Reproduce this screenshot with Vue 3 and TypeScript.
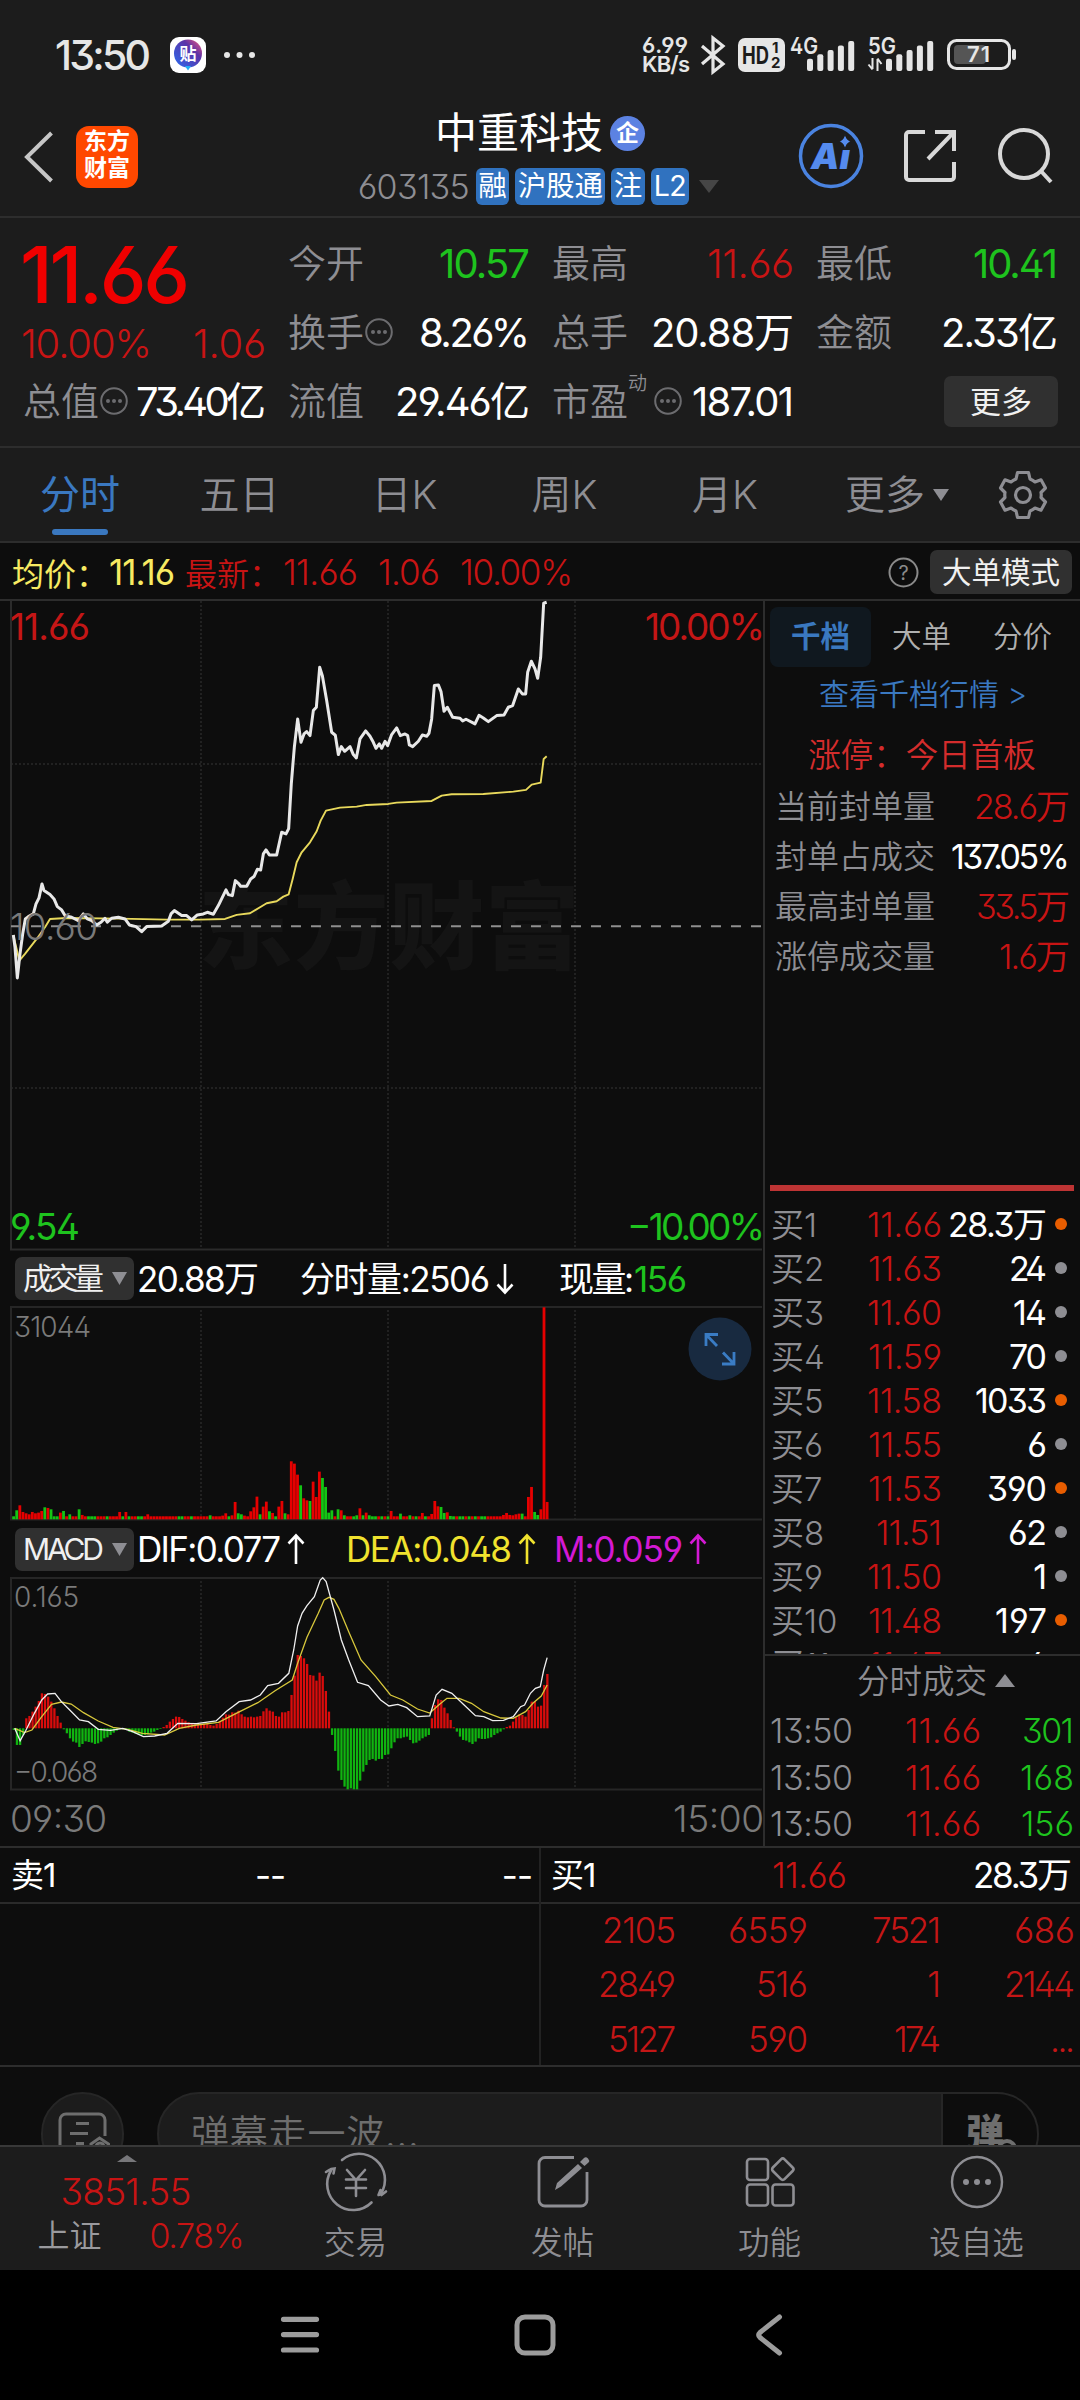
<script setup lang="ts">
interface Cell { label: string; value: string; w: number; tone: string; dots?: boolean; sup?: string }
interface Level { name: string; price: string; pw: number; qty: string; qw: number; hot?: boolean }

// Spreads or tightens the letters of a text so that it takes the given width.
const vFit = {
  mounted(el: HTMLElement, binding: { value: number }) {
    const n = Array.from((el.textContent ?? '').trim()).length
    if (n < 2) return
    const gap = (binding.value - el.getBoundingClientRect().width) / (n - 1)
    el.style.letterSpacing = `${gap}px`
    el.style.marginRight = `${-gap}px`
  },
}

const columns: Cell[][] = [
  [
    { label: '今开', value: '10.57', w: 91, tone: 'green' },
    { label: '换手', value: '8.26%', w: 111, tone: 'white', dots: true },
    { label: '流值', value: '29.46亿', w: 135, tone: 'white' },
  ],
  [
    { label: '最高', value: '11.66', w: 87, tone: 'red' },
    { label: '总手', value: '20.88万', w: 143, tone: 'white' },
    { label: '市盈', value: '187.01', w: 102, tone: 'white', dots: true, sup: '动' },
  ],
  [
    { label: '最低', value: '10.41', w: 85, tone: 'green' },
    { label: '金额', value: '2.33亿', w: 117, tone: 'white' },
  ],
]

const tabs = [
  { t: '分时', w: 160, on: true },
  { t: '五日', w: 159 },
  { t: '日K', w: 171 },
  { t: '周K', w: 149 },
  { t: '月K', w: 172 },
]

const limits = [
  { label: '当前封单量', value: '28.6万', w: 96, tone: 'red' },
  { label: '封单占成交', value: '137.05%', w: 119, tone: 'white' },
  { label: '最高封单量', value: '33.5万', w: 94, tone: 'red' },
  { label: '涨停成交量', value: '1.6万', w: 71, tone: 'red' },
]

const levels: Level[] = [
  { name: '买1', price: '11.66', pw: 75, qty: '28.3万', qw: 99, hot: true },
  { name: '买2', price: '11.63', pw: 74, qty: '24', qw: 38 },
  { name: '买3', price: '11.60', pw: 75, qty: '14', qw: 34 },
  { name: '买4', price: '11.59', pw: 74, qty: '70', qw: 38 },
  { name: '买5', price: '11.58', pw: 75, qty: '1033', qw: 72, hot: true },
  { name: '买6', price: '11.55', pw: 74, qty: '6', qw: 20 },
  { name: '买7', price: '11.53', pw: 74, qty: '390', qw: 60, hot: true },
  { name: '买8', price: '11.51', pw: 66, qty: '62', qw: 39 },
  { name: '买9', price: '11.50', pw: 75, qty: '1', qw: 12 },
  { name: '买10', price: '11.48', pw: 74, qty: '197', qw: 52, hot: true },
  { name: '买11', price: '11.47', pw: 74, qty: '4', qw: 20 },
]

const trades = [
  { qty: '301', w: 52 },
  { qty: '168', w: 54 },
  { qty: '156', w: 53 },
]

const orders = [
  [{ q: '2105', w: 74 }, { q: '6559', w: 80 }, { q: '7521', w: 69 }, { q: '686', w: 61 }],
  [{ q: '2849', w: 78 }, { q: '516', w: 52 }, { q: '1', w: 12 }, { q: '2144', w: 71 }],
  [{ q: '5127', w: 68 }, { q: '590', w: 60 }, { q: '174', w: 47 }, { q: '...', w: 25 }],
]

const price = '40,1033 45,1070 52,1162 60,1090 68,1030 76,985 85,978 100,970 108,940 117,922 126,880 132,900 150,912 162,925 172,948 185,958 195,975 215,980 235,990 250,970 262,985 275,990 290,1003 303,995 315,983 322,995 335,983 355,980 375,985 388,1003 408,1008 425,1023 440,1008 485,1006 505,992 513,970 523,960 545,975 560,975 575,988 592,973 610,970 622,965 640,971 655,945 678,898 685,912 697,915 706,870 715,878 722,887 740,887 752,865 762,858 772,836 782,838 790,790 798,778 808,793 830,793 845,725 858,730 866,714 874,578 883,470 893,385 903,455 912,430 920,423 930,435 940,360 949,350 959,230 967,255 980,330 995,425 1006,434 1015,492 1024,468 1034,482 1050,468 1060,492 1069,502 1080,445 1097,421 1110,437 1120,455 1128,473 1138,460 1145,473 1155,452 1163,465 1175,432 1190,412 1201,435 1215,430 1223,435 1228,463 1238,468 1255,452 1267,433 1280,437 1287,428 1295,385 1303,285 1315,283 1323,303 1332,362 1342,350 1358,380 1380,383 1388,391 1398,386 1425,400 1437,374 1450,382 1465,393 1490,375 1512,373 1525,350 1538,345 1555,295 1567,310 1577,310 1583,245 1594,212 1605,235 1613,263 1622,200 1631,38 1640,35'
const average = '40,1033 58,1110 75,1090 110,1045 135,1010 150,985 200,982 360,984 500,987 600,987 675,985 710,973 750,968 800,938 830,932 850,918 866,911 878,865 890,815 905,785 930,755 950,722 962,690 978,660 1020,651 1070,648 1100,643 1165,640 1190,636 1295,631 1325,615 1355,611 1450,610 1540,603 1578,598 1595,582 1622,576 1631,505 1640,497'
const dif = '30,625 41,662 52,633 70,580 85,540 97,522 112,520 125,545 140,567 162,600 180,605 200,628 225,631 250,625 270,635 292,650 315,648 340,640 362,610 400,611 440,603 460,575 487,545 510,540 530,525 545,497 567,490 588,460 598,390 606,318 615,280 625,257 640,230 652,180 657,173 664,185 680,270 695,360 710,420 728,487 750,497 775,540 792,558 810,553 828,563 850,590 875,588 888,525 900,508 920,520 945,555 968,587 985,590 1003,602 1025,601 1045,590 1060,560 1068,555 1080,520 1090,505 1100,500 1107,450 1114,413'
const dea = '30,625 50,638 65,630 85,590 105,553 125,546 145,552 170,578 200,603 230,622 260,628 290,640 335,645 365,625 400,615 445,607 485,577 525,548 560,512 595,480 606,430 625,352 648,280 660,240 670,232 680,238 690,265 710,335 735,420 765,470 795,525 820,540 850,567 875,579 895,553 910,535 935,535 960,550 985,575 1020,594 1045,595 1070,575 1085,550 1102,528 1114,495'

// Maps "x,y x,y" pairs to chart pixels.
function scale(points: string, kx: number, ky: number, dx = 0, dy = 0): string {
  return points
    .split(' ')
    .map((p) => {
      const [x, y] = p.split(',').map(Number)
      return `${(x / kx - dx).toFixed(2)},${(y / ky - dy).toFixed(2)}`
    })
    .join(' ')
}
const pricePts = scale(price, 3, 3, 0, 11)
const avgPts = scale(average, 3, 3, 0, 11)
const difPts = scale(dif, 2.036, 3, 0, 57)
const deaPts = scale(dea, 2.036, 3, 0, 57)

// Minute volumes: height in thirds of a pixel, with the bar's colour.
const volume = (
  '9g 27g 42r 22r 18r 15r 22r 18r 20r 25r 36g 34r 30g 9g 9g 20r 25g 9r 15g 9r 9r 30g 13r 9r 9g 9g 9g 9r 9r 9r 9g 9r 9r 9r 22r 9g 22r 9g 9r 9r 9g 9g 9r 15r ' +
  '9r 9r 9r 9r 9r 9r 9r 9r 9r 9g 9g 9r 9r 9g 9r 9r 9r 9r 9r 12g 9r 9r 9r 11r 18r 9g 12r 52r 18g 15g 11r 9r 24r 36r 68r 15g 38r 53r 24g 19r 9g 38r 55r 18g 15r ' +
  '174r 167r 134r 102g 63r 57r 55g 113r 67r 143r 124g 97g 20g 27g 9r 30g 27r 12g 9r 9r 9g 12g 33r 12g 20r 12g 9g 9g 9r 9g 9r 9g 25r 9r 9r 17g 9r 9r 12g 9r 9g 9r 19r 9g 9r 16r ' +
  '55r 39r 37g 19g 21r 10g 9g 9r 9g 9g 9r 9g 9r 9g 9r 9g 9g 9r 9r 9r 9r 9r 13r 19r 13r 12r 15r 17r 17g 9r 67r 97r 22g 13g 30r 636r 52r'
)
  .split(' ')
  .map((s, i) => ({ x: 12.2 + i * 3.12, h: parseInt(s) / 3, c: s.endsWith('g') ? '#14c414' : '#e60000' }))

const macdTops = [
  630, 675, 675, 645, 595, 588, 575, 560, 543, 520, 522, 530, 545, 565, 588, 608, 628, 640, 655, 665, 668, 681, 672, 664, 666, 668, 672, 670,
  665, 655, 652, 645, 638, 632, 628, 628, 630, 635, 638, 641, 643, 645, 645, 643, 638, 635, 630, 627, 621, 615, 605, 597, 590, 591, 597, 602,
  607, 612, 613, 614, 612, 612, 612, 615, 617, 612, 604, 593, 583, 584, 577, 578, 572, 583, 590, 592, 590, 592, 590, 588, 574, 565, 572, 575,
  588, 590, 577, 577, 573, 525, 467, 405, 408, 415, 432, 465, 467, 482, 458, 468, 513, 575, 645, 693, 752, 780, 800, 808, 805, 808, 808, 782,
  755, 735, 720, 717, 722, 717, 717, 705, 703, 685, 667, 655, 655, 652, 650, 660, 670, 668, 662, 655, 650, 645, 595, 555, 538, 540, 563, 580,
  600, 622, 635, 650, 660, 662, 667, 672, 665, 655, 657, 657, 655, 652, 645, 640, 635, 628, 621, 617, 605, 592, 583, 585, 590, 570, 545, 545,
  560, 557, 495, 462,
]
const macd = macdTops.map((t, i) => {
  const d = (625 - t) / 3
  return { x: 12.7 + i * 3.12, y: d > 0 ? 151.3 - d : 151.3, h: Math.abs(d), c: d > 0 ? '#d90c0c' : '#10b410' }
})
const grid = [201, 388, 575]
const bars4 = [14, 19, 24, 29, 34]
</script>

<template>
  <div class="screen">
    <div class="status">
      <span class="clock" v-fit="96">13:50</span>
      <svg class="tie" width="36" height="36" viewBox="0 0 36 36">
        <defs>
          <linearGradient id="tg" x1="1" y1="0" x2="0" y2="1">
            <stop offset="0" stop-color="#ff5a78" /><stop offset=".35" stop-color="#5a34a8" /><stop offset="1" stop-color="#2b6cf0" />
          </linearGradient>
        </defs>
        <rect width="36" height="36" rx="9" fill="#fff" />
        <circle cx="18" cy="16.500" r="14" fill="url(#tg)" /><path d="M15 29h6l-3 4.500z" fill="#22b0f5" />
        <text x="18" y="23" text-anchor="middle" font-size="17" font-weight="700" fill="#fff">贴</text>
      </svg>
      <svg width="34" height="8" viewBox="0 0 34 8" fill="#e6e6e6"><circle cx="4" cy="4" r="3" /><circle cx="16.500" cy="4" r="3" /><circle cx="29" cy="4" r="3" /></svg>
      <div class="speed"><span v-fit="46">6.99</span><span v-fit="48">KB/s</span></div>
      <svg class="bt" width="26" height="38" viewBox="0 0 26 38" fill="none" stroke="#e6e6e6" stroke-width="3.200"><path d="M2 10l21 18-10 8V2l10 8L2 28" /></svg>
      <svg class="hd" width="47" height="34" viewBox="0 0 47 34">
        <rect width="47" height="34" rx="7" fill="#e6e6e6" />
        <text x="4" y="26" font-size="24" font-weight="700" textLength="27" lengthAdjust="spacingAndGlyphs" fill="#1c1c1c">HD</text>
        <text x="34" y="15" font-size="15" font-weight="700" fill="#1c1c1c">1</text>
        <text x="33" y="30" font-size="15" font-weight="700" fill="#1c1c1c">2</text>
      </svg>
      <svg class="sig1" width="66" height="36" viewBox="0 0 66 36" fill="#e6e6e6">
        <text x="0" y="17" font-size="23" font-weight="600" textLength="28" lengthAdjust="spacingAndGlyphs">4G</text>
        <rect v-for="(h, i) in bars4" :key="i" :x="17 + i * 10.300" :y="34 - h * 0.880" width="6" :height="h * 0.880" rx="2" />
      </svg>
      <svg class="sig2" width="66" height="36" viewBox="0 0 66 36" fill="#e6e6e6">
        <text x="0" y="17" font-size="23" font-weight="600" textLength="28" lengthAdjust="spacingAndGlyphs">5G</text>
        <path d="M4.500 21v11M0.500 27.500l4 5M9.500 34V22M13.500 27l-4-5.500" stroke="#e6e6e6" stroke-width="2" />
        <rect v-for="(h, i) in bars4" :key="i" :x="18 + i * 10.300" :y="34 - h * 0.880" width="6" :height="h * 0.880" rx="2" />
      </svg>
      <svg class="bat" width="70" height="32" viewBox="0 0 70 32">
        <rect x="1.500" y="1.500" width="61" height="28" rx="8" fill="none" stroke="#e6e6e6" stroke-width="3" />
        <rect x="7" y="6" width="32" height="19" rx="4" fill="#555" /><rect x="65" y="10" width="4" height="11" rx="2" fill="#e6e6e6" />
        <text x="20" y="23" font-size="22" font-weight="600" textLength="23" fill="#e6e6e6">71</text>
      </svg>
    </div>

    <header class="head">
      <div class="head-left">
        <svg width="30" height="54" viewBox="0 0 30 54" fill="none" stroke="#c6c6c6" stroke-width="4"><path d="M27.500 3L3 27l24.500 24" /></svg>
        <div class="logo"><span>东方</span><span>财富</span></div>
      </div>
      <div class="head-mid">
        <div class="title"><b>中重科技</b><i>企</i></div>
        <div class="codes">
          <span class="code" v-fit="112">603135</span>
          <em>融</em><em>沪股通</em><em>注</em><em class="l2">L2</em>
          <svg width="20" height="13" viewBox="0 0 20 13"><path d="M0 0h20L10 13z" fill="#464646" /></svg>
        </div>
      </div>
      <div class="head-right">
        <svg width="66" height="66" viewBox="0 0 66 66">
          <circle cx="33" cy="33" r="30.500" fill="none" stroke="#4a83e0" stroke-width="3.500" />
          <text x="13" y="46" font-size="35" font-weight="900" font-style="italic" textLength="39" lengthAdjust="spacingAndGlyphs" fill="#558bee">Aı</text>
          <path d="M47 11q1 5.500 5.500 7.500-4.500 2-5.500 7.500-1-5.500-5.500-7.500 4.500-2 5.500-7.500z" fill="#558bee" stroke="#1c1c1c" stroke-width="1" />
        </svg>
        <svg width="54" height="54" viewBox="0 0 54 54" fill="none" stroke="#d8d8d8" stroke-width="4"><path d="M22 3H6a3 3 0 0 0-3 3v42a3 3 0 0 0 3 3h42a3 3 0 0 0 3-3V33M32 3h19v19M50 4L25 30" /></svg>
        <svg width="56" height="56" viewBox="0 0 56 56" fill="none" stroke="#d8d8d8" stroke-width="4"><circle cx="27" cy="26" r="24" /><path d="M43 42l11 12" /></svg>
      </div>
    </header>

    <section class="quote">
      <div class="col first">
        <div class="big"><span v-fit="170">11.66</span></div>
        <div class="chg red"><span v-fit="131">10.00%</span><span v-fit="73">1.06</span></div>
        <div class="cell">
          <label>总值</label>
          <svg class="more-dot" width="28" height="28" viewBox="0 0 28 28"><circle cx="14" cy="14" r="12.800" fill="none" stroke="#6c6c6f" stroke-width="2" /><g fill="#6c6c6f"><circle cx="8" cy="14" r="2" /><circle cx="14" cy="14" r="2" /><circle cx="20" cy="14" r="2" /></g></svg>
          <span class="val white" v-fit="130">73.40亿</span>
        </div>
      </div>
      <div v-for="(col, c) in columns" :key="c" class="col">
        <div v-for="cell in col" :key="cell.label" class="cell">
          <label>{{ cell.label }}</label>
          <sup v-if="cell.sup">{{ cell.sup }}</sup>
          <svg v-if="cell.dots" class="more-dot" width="28" height="28" viewBox="0 0 28 28"><circle cx="14" cy="14" r="12.800" fill="none" stroke="#6c6c6f" stroke-width="2" /><g fill="#6c6c6f"><circle cx="8" cy="14" r="2" /><circle cx="14" cy="14" r="2" /><circle cx="20" cy="14" r="2" /></g></svg>
          <span class="val" :class="cell.tone" v-fit="cell.w">{{ cell.value }}</span>
        </div>
        <div v-if="c === 2" class="cell"><button class="more">更多</button></div>
      </div>
    </section>

    <nav class="tabs">
      <a v-for="t in tabs" :key="t.t" :class="{ on: t.on }" :style="{ width: t.w + 'px' }">{{ t.t }}</a>
      <a class="tab-more">更多<svg width="16" height="12" viewBox="0 0 16 12"><path d="M0 0h16L8 12z" fill="#8e8e93" /></svg></a>
      <svg class="gear" width="50" height="50" viewBox="-25 -25 50 50" fill="none" stroke="#8e8e93" stroke-width="3.200" stroke-linejoin="round">
        <path d="M-5.500 -22.500H5.500L7 -16Q10 -14.700 12 -13L18 -15.200L22.500 -7L18 -2.500Q18.500 0 18 2.500L22.500 7L18 15.200L12 13Q10 14.700 7 16L5.500 22.500H-5.500L-7 16Q-10 14.700 -12 13L-18 15.200L-22.500 7L-18 2.500Q-18.500 0 -18 -2.500L-22.500 -7L-18 -15.200L-12 -13Q-10 -14.700 -7 -16Z" />
        <circle r="7.500" />
      </svg>
    </nav>

    <div class="info">
      <span class="yellow lab">均价：</span><span class="yellow v1" v-fit="66">11.16</span>
      <span class="red lab">最新：</span><span class="red v2" v-fit="75">11.66</span><span class="red v3" v-fit="62">1.06</span><span class="red v4" v-fit="113">10.00%</span>
      <svg class="help" width="31" height="31" viewBox="0 0 31 31"><circle cx="15.500" cy="15.500" r="14" fill="none" stroke="#8a8a8a" stroke-width="2" /><text x="15.500" y="22.500" text-anchor="middle" font-size="20" fill="#8a8a8a">?</text></svg>
      <button>大单模式</button>
    </div>

    <main class="main">
      <div class="charts">
        <svg width="763" height="650" viewBox="0 0 763 650">
          <text x="198" y="361" font-size="95" font-weight="900" textLength="382" fill="#141414">东方财富</text>
          <g stroke="#292929" stroke-width="1.500" stroke-dasharray="2 2">
            <path v-for="x in grid" :key="x" :d="`M${x} 0V648`" /><path d="M11 163H763M11 487H763" />
          </g>
          <path d="M11 0V648.500H762" fill="none" stroke="#2b2b2b" stroke-width="2" />
          <path d="M11 325.200H762" stroke="#8f8f8f" stroke-width="2" stroke-dasharray="10 10" />
          <polyline :points="avgPts" transform="translate(0 .6)" fill="none" stroke="#e8d95c" stroke-width="1.900" stroke-linejoin="round" />
          <polyline :points="pricePts" transform="translate(0 .6)" fill="none" stroke="#e8e8e8" stroke-width="3" stroke-linejoin="round" />
          <g font-size="37">
            <text x="10" y="38.500" textLength="80" fill="#c41616">11.66</text>
            <text x="645" y="38.500" textLength="120" fill="#c41616">10.00%</text>
            <text x="10" y="339" textLength="88" fill="#7a7a7a" font-weight="350">10.60</text>
            <text x="10" y="638.500" textLength="70" fill="#1ec31e">9.54</text>
            <text x="627" y="638.500" textLength="138" fill="#1ec31e">−10.00%</text>
          </g>
        </svg>

        <div class="ind">
          <button><span v-fit="81">成交量</span><svg width="15" height="13" viewBox="0 0 15 13"><path d="M0 0h15L7.500 13z" fill="#8e8e93" /></svg></button>
          <span class="i1" v-fit="122">20.88万</span><span class="i2" v-fit="190">分时量:2506</span>
          <svg class="arr" width="18" height="32" viewBox="0 0 18 32" fill="none" stroke="#fff" stroke-width="2.600"><path d="M9 1v28M1.500 21.500L9 29.500l7.500-8" /></svg>
          <span class="i3" v-fit="75">现量:</span><span class="green" v-fit="53">156</span>
        </div>

        <div class="vol">
          <svg width="763" height="215" viewBox="0 0 763 215">
            <g stroke="#292929" stroke-width="1.500" stroke-dasharray="2 2"><path v-for="x in grid" :key="x" :d="`M${x} 0V213`" /></g>
            <path d="M762 1H11V213.500H762" fill="none" stroke="#262626" stroke-width="2" />
            <text x="14" y="31" font-size="28" textLength="77" font-weight="350" fill="#7a7a7a">31044</text>
            <rect v-for="(b, i) in volume" :key="i" :x="b.x" :y="213.300 - b.h" width="2.800" :height="b.h" :fill="b.c" />
          </svg>
          <svg class="expand" width="64" height="64" viewBox="0 0 64 64">
            <circle cx="32" cy="32" r="31.500" fill="#182a40" />
            <path d="M18 29V17.500h12M18 17.500L29 29M46 35v12H34M46 47L35 35.500" fill="none" stroke="#3a7cc4" stroke-width="2.800" />
          </svg>
        </div>

        <div class="ind macd-row">
          <button><span v-fit="81">MACD</span><svg width="15" height="13" viewBox="0 0 15 13"><path d="M0 0h15L7.500 13z" fill="#8e8e93" /></svg></button>
          <span class="i1" v-fit="144">DIF:0.077</span>
          <svg class="arr" width="18" height="32" viewBox="0 0 18 32" fill="none" stroke="#fff" stroke-width="2.600"><path d="M9 31V3M1.500 10.500L9 2.500l7.500 8" /></svg>
          <span class="yel i4" v-fit="166">DEA:0.048</span>
          <svg class="arr" width="18" height="32" viewBox="0 0 18 32" fill="none" stroke="#f0e22e" stroke-width="2.600"><path d="M9 31V3M1.500 10.500L9 2.500l7.500 8" /></svg>
          <span class="mag i5" v-fit="129">M:0.059</span>
          <svg class="arr" width="18" height="32" viewBox="0 0 18 32" fill="none" stroke="#d419d4" stroke-width="2.600"><path d="M9 31V3M1.500 10.500L9 2.500l7.500 8" /></svg>
        </div>

        <svg width="763" height="270" viewBox="0 0 763 270">
          <g stroke="#292929" stroke-width="1.500" stroke-dasharray="2 2"><path v-for="x in grid" :key="x" :d="`M${x} 0V212`" /></g>
          <path d="M762 1H11V212.500H762" fill="none" stroke="#262626" stroke-width="2" />
          <rect v-for="(b, i) in macd" :key="i" :x="b.x" :y="b.y" width="2.300" :height="b.h" :fill="b.c" />
          <polyline :points="deaPts" fill="none" stroke="#d8c83c" stroke-width="1.300" />
          <polyline :points="difPts" fill="none" stroke="#f0f0f0" stroke-width="1.300" />
          <g fill="#7a7a7a" font-weight="350">
            <text x="14" y="30" font-size="28" textLength="65">0.165</text>
            <text x="14" y="205" font-size="28" textLength="84">−0.068</text>
            <text x="10" y="255" font-size="37" textLength="97">09:30</text>
            <text x="673" y="255" font-size="37" textLength="91">15:00</text>
          </g>
        </svg>
      </div>

      <aside class="side">
        <div class="seg"><a class="on">千档</a><a>大单</a><a>分价</a></div>
        <div class="link">查看千档行情 &gt;</div>
        <div class="limit"><span>涨停：今日首板</span></div>
        <div v-for="l in limits" :key="l.label" class="lrow"><label>{{ l.label }}</label><span :class="l.tone" v-fit="l.w">{{ l.value }}</span></div>
        <div class="redbar"></div>
        <div class="book">
          <div v-for="l in levels" :key="l.name" class="brow">
            <label>{{ l.name }}</label>
            <span class="red bp"><span v-fit="l.pw">{{ l.price }}</span></span>
            <span class="bq"><span v-fit="l.qw">{{ l.qty }}</span></span>
            <i :class="{ hot: l.hot }"></i>
          </div>
        </div>
        <div class="deal-head">分时成交<svg width="20" height="13" viewBox="0 0 20 13"><path d="M0 13h20L10 0z" fill="#8e8e93" /></svg></div>
        <div v-for="t in trades" :key="t.qty" class="deal">
          <label v-fit="83">13:50</label><span class="red dp"><span v-fit="76">11.66</span></span><span class="green dq"><span v-fit="t.w">{{ t.qty }}</span></span>
        </div>
      </aside>
    </main>

    <section class="queue">
      <div class="half">
        <div class="qhead"><span>卖1</span><span class="dash mid">--</span><span class="dash">--</span></div>
      </div>
      <div class="half right">
        <div class="qhead"><span>买1</span><span class="red mid"><span v-fit="75">11.66</span></span><span v-fit="99">28.3万</span></div>
        <div class="qgrid">
          <template v-for="(row, r) in orders" :key="r"><span v-for="o in row" :key="o.q" class="qcell"><span v-fit="o.w">{{ o.q }}</span></span></template>
        </div>
      </div>
    </section>

    <section class="chat">
      <div class="round">
        <svg width="54" height="54" viewBox="0 0 54 54" fill="none" stroke="#6e6e6e" stroke-width="3"><path d="M47 24V8a6 6 0 0 0-6-6H8a6 6 0 0 0-6 6v36M18 11.500h13M12 21.500h18M18 31.500h8" /><path d="M33 36v-4l8.500-6 9 6v12M38 35a4 4 0 0 1 8 0" /></svg>
      </div>
      <div class="pill"><span class="ph">弹幕走一波...</span><span class="dan">弹<svg width="22" height="22" viewBox="0 0 22 22"><circle cx="11" cy="11" r="8" fill="#0d0d0d" stroke="#6e6e6e" stroke-width="4" /></svg></span></div>
    </section>

    <footer class="bar">
      <div class="index">
        <svg width="20" height="7" viewBox="0 0 20 7"><path d="M0 7h20L10 0z" fill="#77777a" /></svg>
        <div class="red pt"><span v-fit="131">3851.55</span></div>
        <div class="sub"><span>上证</span><span class="red" v-fit="95">0.78%</span></div>
      </div>
      <div class="act">
        <svg width="62" height="58" viewBox="-31 -29 62 58" fill="none" stroke="#8e8e93" stroke-width="2.600" stroke-linecap="round">
          <path d="M-14 -22A26 26 0 0 1 25 11.500M25.500 13l4.500-3.500M22.500 13l2-5M22.500 13l4-1.500M15.500 20.500A26 26 0 0 1 -25 -11.500M-30 -10l4-2.500M-25 -13l3.500-.5-1 5" />
          <path d="M-9 -12L0 -2L9 -12M0 -2V14M-10 -2.500H10M-10 6H10" />
        </svg><span>交易</span>
      </div>
      <div class="act">
        <svg width="62" height="58" viewBox="-31 -29 62 58" fill="none" stroke="#8e8e93" stroke-width="2.800">
          <path d="M11 -24.500H-18a6 6 0 0 0 -6 6V18a6 6 0 0 0 6 6H18a6 6 0 0 0 6 -6V-10" />
          <path d="M-8 8l2-7L15 -18l4 4L-2 4.500z M17 -20l4-4q2-1.500 4 0.500t0.500 4l-4 3.500z" fill="#8e8e93" stroke="none" />
        </svg><span>发帖</span>
      </div>
      <div class="act">
        <svg width="62" height="58" viewBox="-31 -29 62 58" fill="none" stroke="#8e8e93" stroke-width="2.600">
          <rect x="-23" y="-23" width="21" height="21" rx="3" /><rect x="-23" y="2.500" width="21" height="21" rx="3" /><rect x="2.500" y="2.500" width="21" height="21" rx="3" />
          <rect x="4.500" y="-21" width="16.500" height="16.500" rx="2.500" transform="rotate(45 12.750 -12.750)" />
        </svg><span>功能</span>
      </div>
      <div class="act">
        <svg width="62" height="58" viewBox="-31 -29 62 58"><circle r="25" fill="none" stroke="#8e8e93" stroke-width="2.400" /><g fill="#8e8e93"><circle cx="-11" r="3" /><circle r="3" /><circle cx="11" r="3" /></g></svg><span>设自选</span>
      </div>
    </footer>

    <div class="sys">
      <svg width="40" height="42" viewBox="0 0 40 42" stroke="#9c9c9c" stroke-width="5.200" stroke-linecap="round"><path d="M3.500 5.300h33M3.500 20.600h33M3.500 36h33" /></svg>
      <svg width="42" height="42" viewBox="0 0 42 42"><rect x="3" y="3" width="36" height="36" rx="8" fill="none" stroke="#9c9c9c" stroke-width="5" /></svg>
      <svg class="sys-back" width="30" height="44" viewBox="0 0 30 44"><path d="M25.500 4L6 19.500Q3.500 22 6 24.500L25.500 40" fill="none" stroke="#9c9c9c" stroke-width="5" stroke-linecap="round" stroke-linejoin="round" /></svg>
    </div>
  </div>
</template>

<style>
html, body { margin: 0; background: #0d0d0d; }
</style>

<style scoped>
.screen { width: 1080px; height: 2400px; overflow: hidden; display: flex; flex-direction: column; background: #0d0d0d; color: #fff; font-family: Inter, "Noto Sans CJK SC", sans-serif; font-feature-settings: "ss01"; font-weight: 400; }
.screen * { box-sizing: border-box; }
.screen span, label { white-space: nowrap; flex: none; }
button { border: 0; padding: 0; font: inherit; color: #f0f0f0; background: #303030; border-radius: 7px; }
svg { display: block; flex: none; overflow: visible; }
.red { color: #c81414; }
.green { color: #1ec31e; }
.white { color: #fff; }
.yellow { color: #f7ea62; }
.yel { color: #f0e22e; }
.mag { color: #d419d4; }

.status { height: 100px; padding: 9px 0 0 55px; display: flex; align-items: center; background: #1c1c1c; color: #e6e6e6; flex: none; }
.clock { font-size: 41px; font-weight: 500; }
.tie { margin: 0 17px 0 19px; }
.speed { margin-left: 385px; display: flex; flex-direction: column; align-items: flex-start; font-size: 22px; line-height: 19px; font-weight: 600; }
.speed span { display: inline-block; }
.bt { margin-left: 10px; }
.hd { margin-left: 12px; }
.sig1 { margin-left: 5px; }
.sig2 { margin-left: 12px; }
.bat { margin-left: 13px; }

.head { height: 118px; display: grid; grid-template-columns: 340px 400px 340px; background: #1c1c1c; border-bottom: 2px solid #2d2d2d; flex: none; }
.head-left { display: flex; align-items: center; padding: 0 0 3px 24px; gap: 22px; }
.logo { width: 62px; height: 62px; border-radius: 13px; background: #ff4800; display: flex; flex-direction: column; align-items: center; justify-content: center; font-size: 23px; line-height: 27px; font-weight: 700; padding-bottom: 3px; }
.head-mid { display: flex; flex-direction: column; align-items: center; }
.title { display: flex; align-items: center; height: 66px; gap: 7px; }
.title b { font-weight: 400; font-size: 42px; line-height: 60px; }
.title i { width: 35px; height: 35px; border-radius: 50%; background: #5c82e2; font-style: normal; font-weight: 700; font-size: 23px; line-height: 34px; text-align: center; }
.codes { display: flex; align-items: center; height: 41px; }
.code { font-size: 34px; font-weight: 350; color: #8e8e93; margin-left: -3px; }
.codes em { font-style: normal; height: 37px; line-height: 36px; border-radius: 6px; background: #3072bf; font-size: 28.5px; padding: 0 2.5px; margin-left: 6px; letter-spacing: -.1px; }
.codes .l2 { padding: 0 3px; letter-spacing: -.5px; }
.codes svg { margin-left: 10px; }
.head-right { display: flex; align-items: center; justify-content: flex-end; padding: 0 27px 4px 0; gap: 40px; }
.head-right svg:first-child { margin-right: -1px; }

.quote { height: 230px; padding: 11px 22px 0 24px; display: flex; gap: 22px; background: #1c1c1c; border-bottom: 2px solid #2d2d2d; flex: none; }
.col { width: 242px; }
.big { height: 90px; line-height: 90px; font-size: 79px; font-weight: 500; color: #f00000; margin-left: -4px; }
.big span { display: inline-block; }
.chg { height: 48px; display: flex; justify-content: space-between; align-items: center; font-size: 40px; font-weight: 350; margin-left: -3px; }
.cell { height: 69px; display: flex; align-items: center; line-height: 69px; }
.first .cell { margin-left: -1px; }
label { font-weight: 350; color: #8e8e93; }
.cell label { font-size: 38px; }
.cell .more-dot { margin-left: 1px; margin-top: -2px; }
.cell sup { font-size: 19px; line-height: 20px; align-self: flex-start; margin: 7px -9px 0 0; color: #8e8e93; font-weight: 350; }
.cell sup + .more-dot { margin-left: 16px; }
.col .val { font-size: 40px; }
.cell::before { content: ""; order: 1; flex: 1; }
.cell .val, .cell .more { order: 2; }
.cell .val.red { font-weight: 350; }
.more { width: 114px; height: 51px; line-height: 49px; font-size: 31px; }

.tabs { height: 95px; display: flex; align-items: center; background: #1c1c1c; border-bottom: 2px solid #2d2d2d; font-size: 40px; color: #8e8e93; flex: none; }
.tabs a { height: 93px; line-height: 94px; text-align: center; font-weight: 350; display: flex; flex-direction: column; align-items: center; flex: none; }
.tabs .on { color: #3a78c0; font-weight: 400; }
.tabs .on::after { content: ""; width: 56px; height: 6px; border-radius: 3px; background: #3a78c0; margin-top: -13px; }
.tab-more.tab-more { flex-direction: row; width: 173px; padding-left: 34px; gap: 8px; }
.gear { margin: 0 0 0 14px; }

.info { height: 58px; display: flex; align-items: center; padding: 1px 8px 0 12px; border-bottom: 2px solid #2d2d2d; font-size: 35px; flex: none; }
.lab { width: 97px; font-size: 32px; font-weight: 350; }
.yellow.lab { font-weight: 400; }
.v1 + .lab { margin-left: 10px; }
.v2 { margin-left: 1px; }
.v3 { margin-left: 20px; }
.v4 { margin-left: 20px; }
.info .red { font-weight: 350; }
.help { margin: 2px 11px 0 auto; }
.info button { width: 142px; height: 44px; line-height: 42px; font-size: 29.5px; }

.main { height: 1247px; display: flex; border-bottom: 2px solid #2d2d2d; flex: none; }
.charts { width: 763px; flex: none; }
.ind { height: 55px; padding: 0 0 0 15px; display: flex; align-items: center; font-size: 35px; line-height: 50px; }
.ind button { width: 119px; height: 43px; display: flex; align-items: center; padding-left: 8px; font-size: 30px; line-height: 41px; }
.ind button svg { margin-left: 8px; }
.i1 { margin-left: 3px; }
.i2 { margin-left: 41px; }
.arr { margin-left: 6px; }
.i3 { margin-left: 45px; }
.macd-row { height: 56px; padding-top: 0; }
.i4 { margin-left: 41px; }
.i5 { margin-left: 18px; }
.macd-row .arr { margin-left: 6px; }
.vol { position: relative; height: 215px; }
.expand { position: absolute; left: 688px; top: 11px; }

.side { flex: 1; border-left: 2px solid #2d2d2d; padding: 6px 6px 0 5px; }
.seg { display: flex; height: 60px; line-height: 59px; font-size: 29.5px; color: #b0b0b0; font-weight: 350; }
.seg a { width: 101px; text-align: center; border-radius: 8px; }
.seg .on { background: #10181f; color: #3a78c0; font-weight: 700; }
.link { height: 56px; line-height: 54px; text-align: center; font-size: 30px; color: #3a78c0; font-weight: 350; padding-left: 2px; }
.limit { height: 56px; line-height: 65px; font-size: 32.5px; color: #d42c2c; text-align: center; font-weight: 350; }
.lrow { height: 50.1px; display: flex; justify-content: space-between; align-items: center; padding: 5px 4px 0 5px; line-height: 44px; font-size: 34px; }
.lrow label { font-size: 32px; }
.lrow .red { font-weight: 350; }
.redbar { height: 6px; background: #be3434; margin-top: 206px; }
.book { height: 465px; overflow: hidden; padding-top: 12px; margin: 0 -6px 0 -5px; border-bottom: 2px solid #2d2d2d; }
.brow { display: flex; align-items: center; height: 44px; padding-left: 6px; font-size: 34px; line-height: 44px; }
.brow label { font-size: 33px; width: 80px; }
.bp { width: 91px; text-align: right; font-weight: 350; display: flex; justify-content: flex-end; }
.bq { width: 105px; display: flex; justify-content: flex-end; }
.brow i { width: 12px; height: 12px; border-radius: 50%; background: #8e8e93; margin-left: 8px; margin-top: -2px; }
.brow .hot { background: #e85d00; }
.deal-head { height: 52px; display: flex; align-items: center; justify-content: center; gap: 8px; font-size: 32.5px; line-height: 50px; font-weight: 350; color: #8e8e93; padding-left: 28px; }
.deal-head svg { margin-top: -4px; }
.deal { height: 46.6px; display: flex; align-items: center; font-size: 34px; line-height: 44px; padding-bottom: 1px; }
.dp { margin-left: auto; font-weight: 350; }
.dq { width: 93px; display: flex; justify-content: flex-end; font-weight: 350; }
.dp span { display: inline-block; }

.queue { height: 219px; display: flex; border-bottom: 2px solid #2d2d2d; flex: none; }
.half { width: 540px; }
.half + .right { margin-left: -1px; width: 541px; }
.right { border-left: 2px solid #222; }
.qhead { height: 56px; display: flex; align-items: center; border-bottom: 2px solid #2a2a2a; padding: 0 8px 0 11px; font-size: 35px; line-height: 52px; }
.qhead > span:first-child { font-size: 33px; letter-spacing: -1px; width: 100px; }
.right .qhead { padding-left: 10px; }
.right .mid { margin-left: 121px; font-weight: 350; }
.half:first-child .mid { margin-left: 144px; }
.qhead > span:last-child { margin-left: auto; }
.dash { letter-spacing: -1px; }
.qgrid { display: grid; grid-template-columns: 135px 132px 133px 134px; grid-auto-rows: 54.4px; font-size: 35px; line-height: 53px; color: #c41616; font-weight: 350; }
.qcell { display: flex; justify-content: flex-end; }

.chat { height: 78px; overflow: hidden; display: flex; padding: 25px 42px 0 41px; gap: 33px; flex: none; }
.round { width: 83px; height: 84px; border-radius: 42px; background: #1c1c1c; border: 2px solid #262626; padding: 18px 0 0 15px; flex: none; }
.pill { width: 882px; height: 84px; border-radius: 42px; background: #1c1c1c; border: 2px solid #262626; display: flex; overflow: hidden; flex: none; }
.ph { flex: 1 !important; padding-left: 32px; font-size: 38px; line-height: 79px; color: #6e6e6e; font-weight: 350; letter-spacing: .8px; }
.dan { width: 96px; border-left: 2px solid #262626; background: #0d0d0d; color: #6e6e6e; font-weight: 900; font-size: 38px; line-height: 76px; padding-left: 23px; position: relative; }
.dan svg { position: absolute; left: 53px; top: 44px; }

.bar { height: 125px; background: #1c1c1c; border-top: 2px solid #383838; display: flex; flex: none; }
.index { width: 252px; display: flex; flex-direction: column; align-items: center; padding-top: 8px; }
.pt { height: 60px; line-height: 59px; font-size: 37px; font-weight: 350; }
.index svg { margin-left: 2px; }
.pt span, .sub span { display: inline-block; }
.sub { display: flex; justify-content: space-between; align-items: center; width: 207px; height: 32px; font-size: 34px; margin-left: 30px; line-height: 32px; margin-top: -2px; }
.sub .red { font-weight: 350; }
.sub span:first-child { font-size: 32px; color: #9a9a9e; font-weight: 350; }
.act { width: 207px; display: flex; flex-direction: column; align-items: center; padding-top: 6px; font-size: 31.5px; color: #8e8e93; font-weight: 350; }
.act span { line-height: 40px; margin-top: 12px; }
.sys { height: 130px; background: #000; display: flex; align-items: center; flex: none; padding-left: 280px; gap: 194px; }
.sys-back { margin-left: 4px; }
</style>
